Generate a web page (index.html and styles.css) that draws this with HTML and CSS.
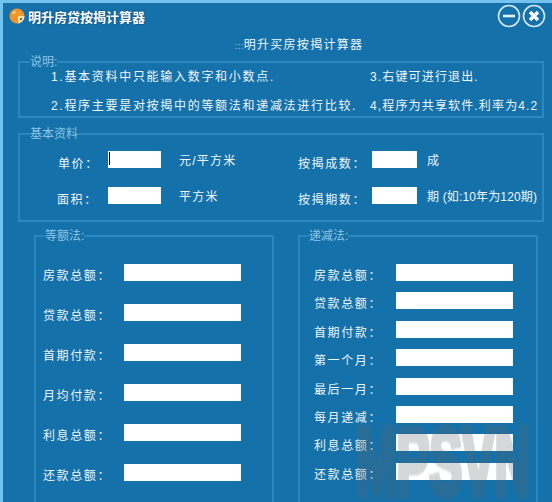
FILE: index.html
```html
<html>
<head>
    <meta charset="utf-8">
    <link rel="stylesheet" href="styles.css">
</head>
<body>
    <div class="window">
        <div class="titleBar">
            <svg class="logo" width="16" height="16" viewBox="0 0 16 16">
                <circle cx="8" cy="8" r="7.5" fill="#f0962a"/>
                <path d="M3 5 Q5 2 7 3 L6 6 Q4 7 3 5Z" fill="#f9c98a"/>
                <path d="M9 8 H15.5 A7.5 7.5 0 0 1 9 15.5Z" fill="#f6e3b8"/>
                <path d="M11 10 H13 V12 H11Z" fill="#8a5a20"/>
            </svg>
            <span class="title">明升房贷按揭计算器</span>
            <div class="titleButtons">
                <svg width="24" height="24" viewBox="0 0 24 24">
                    <circle cx="12" cy="12" r="10.5" fill="none" stroke="#d5e8f3" stroke-width="1.6"/>
                    <path d="M6 12 H18" stroke="#e8f3f9" stroke-width="2.6"/>
                </svg>
                <svg width="24" height="24" viewBox="0 0 24 24">
                    <circle cx="12" cy="12" r="10.5" fill="none" stroke="#d5e8f3" stroke-width="1.6"/>
                    <path d="M8 8 L16 16 M16 8 L8 16" stroke="#ffffff" stroke-width="3.4"/>
                </svg>
            </div>
        </div>

        <div class="heading"><span class="dots">:::</span>明升买房按揭计算器</div>

        <fieldset class="group notes">
            <legend>说明:</legend>
            <div class="noteRow">
                <span class="noteLeft">1.基本资料中只能输入数字和小数点.</span>
                <span class="noteRight">3.右键可进行退出.</span>
            </div>
            <div class="noteRow">
                <span class="noteLeft">2.程序主要是对按揭中的等额法和递减法进行比较.</span>
                <span class="noteRight">4,程序为共享软件.利率为4.2</span>
            </div>
        </fieldset>

        <fieldset class="group basic">
            <legend>基本资料</legend>
            <div class="basicGrid">
                <span class="label">单价：</span>
                <div class="field first"><span class="caret"></span></div>
                <span class="unit">元/平方米</span>
                <span class="label">按揭成数：</span>
                <div class="field small"></div>
                <span class="unit tight">成</span>

                <span class="label">面积：</span>
                <div class="field first"></div>
                <span class="unit">平方米</span>
                <span class="label">按揭期数：</span>
                <div class="field small"></div>
                <span class="unit tight">期 (如:10年为120期)</span>
            </div>
        </fieldset>

        <div class="columns">
            <fieldset class="group method equal">
                <legend>等额法:</legend>
                <div class="calcRow"><span class="label">房款总额：</span><div class="field wide"></div></div>
                <div class="calcRow"><span class="label">贷款总额：</span><div class="field wide"></div></div>
                <div class="calcRow"><span class="label">首期付款：</span><div class="field wide"></div></div>
                <div class="calcRow"><span class="label">月均付款：</span><div class="field wide"></div></div>
                <div class="calcRow"><span class="label">利息总额：</span><div class="field wide"></div></div>
                <div class="calcRow"><span class="label">还款总额：</span><div class="field wide"></div></div>
            </fieldset>
            <fieldset class="group method decrease">
                <legend>递减法:</legend>
                <div class="calcRow"><span class="label">房款总额：</span><div class="field wide"></div></div>
                <div class="calcRow"><span class="label">贷款总额：</span><div class="field wide"></div></div>
                <div class="calcRow"><span class="label">首期付款：</span><div class="field wide"></div></div>
                <div class="calcRow"><span class="label">第一个月：</span><div class="field wide"></div></div>
                <div class="calcRow"><span class="label">最后一月：</span><div class="field wide"></div></div>
                <div class="calcRow"><span class="label">每月递减：</span><div class="field wide"></div></div>
                <div class="calcRow"><span class="label">利息总额：</span><div class="field wide"></div></div>
                <div class="calcRow"><span class="label">还款总额：</span><div class="field wide"></div></div>
            </fieldset>
        </div>

        <div class="watermark">MPSVN</div>
    </div>
</body>
</html>
```

FILE: styles.css
```css
html, body {
    margin: 0;
    padding: 0;
    background: #1471a9;
}

.window {
    position: relative;
    width: 552px;
    height: 502px;
    box-sizing: border-box;
    overflow: hidden;
    background: #1471a9;
    border-top: 3px solid #74c3ee;
    border-left: 3px solid #74c3ee;
    color: #eef6fb;
    font-family: "Liberation Sans", "Noto Sans CJK SC", sans-serif;
    font-size: 12px;
}

.titleBar {
    display: flex;
    align-items: center;
    height: 26px;
    padding-left: 6px;
}

.logo {
    margin-right: 3px;
    margin-top: -1px;
}

.title {
    color: #ffffff;
    font-size: 13px;
    font-weight: bold;
    text-shadow: 0 0 2px #0b3f60;
}

.titleButtons {
    display: flex;
    margin-left: auto;
    margin-right: 6px;
    gap: 1px;
}

.heading {
    height: 20px;
    margin-top: 6px;
    padding-left: 43px;
    text-align: center;
    letter-spacing: 1.3px;
    line-height: 20px;
}

.dots {
    font-size: 9px;
    letter-spacing: 0.5px;
    color: #a9d3ec;
}

.group {
    margin: 0;
    padding: 0;
    border: 2px solid #2b87bd;
    box-sizing: border-box;
    min-width: 0;
}

.group legend {
    padding: 0;
    color: #8fc6e6;
    font-size: 12px;
    line-height: 14px;
}

.notes {
    width: 526px;
    height: 63px;
    margin: 0 0 0 15px;
}

.notes legend {
    margin-left: 10px;
}

.noteRow {
    display: flex;
    height: 29px;
    margin-top: -1px;
    margin-left: 31px;
    line-height: 18px;
    white-space: nowrap;
}

.noteRow + .noteRow {
    margin-top: 0;
}

.noteLeft {
    width: 319px;
    flex: none;
    letter-spacing: 1.7px;
}

.noteRight {
    letter-spacing: 1.15px;
}

.basic {
    width: 526px;
    height: 95px;
    margin: 9px 0 0 15px;
}

.basic legend {
    margin-left: 10px;
}

.basicGrid {
    display: grid;
    grid-template-columns: 51px 53px 137px 74px 45px auto;
    grid-auto-rows: 17px;
    row-gap: 19px;
    margin-top: 10px;
    padding-left: 37px;
    align-items: center;
}

.label {
    position: relative;
    top: 4px;
    letter-spacing: 1.6px;
    line-height: 17px;
    white-space: nowrap;
}

.basicGrid .label {
    top: 5px;
    left: 1px;
}

.basicGrid .label:nth-child(n+4) {
    width: 74px;
    left: 0;
}

.unit {
    padding-left: 18px;
    letter-spacing: 1.2px;
    white-space: nowrap;
}

.unit.tight {
    padding-left: 10px;
    letter-spacing: 0.15px;
}

.field {
    position: relative;
    height: 17px;
    background: #ffffff;
}

.first {
    width: 53px;
}

.small {
    width: 45px;
}

.wide {
    width: 117px;
}

.caret {
    position: absolute;
    left: 1px;
    top: 1px;
    width: 1px;
    height: 13px;
    background: #000000;
}

.columns {
    display: flex;
    margin: 7px 0 0 31px;
    gap: 24px;
}

.method {
    width: 240px;
    height: 280px;
}

.method legend {
    margin-left: 9px;
}

.calcRow {
    display: flex;
    align-items: center;
    height: 17px;
    padding-left: 7px;
}

.decrease .calcRow {
    padding-left: 14px;
    margin-bottom: 11.4px;
}

.calcRow .label {
    width: 81px;
    flex: none;
}

.decrease .calcRow .label {
    width: 82px;
}

.equal .calcRow {
    margin-bottom: 23px;
}

.equal .calcRow:first-of-type,
.decrease .calcRow:first-of-type {
    margin-top: 21px;
}

.watermark {
    position: absolute;
    left: 353px;
    top: 424px;
    color: #5f6468;
    -webkit-text-stroke: 7px #5f6468;
    opacity: 0.25;
    font-family: "Liberation Sans", sans-serif;
    font-size: 96px;
    font-weight: bold;
    line-height: 70px;
    white-space: nowrap;
    transform: scaleX(0.51);
    transform-origin: left top;
    filter: blur(1px);
}
```
